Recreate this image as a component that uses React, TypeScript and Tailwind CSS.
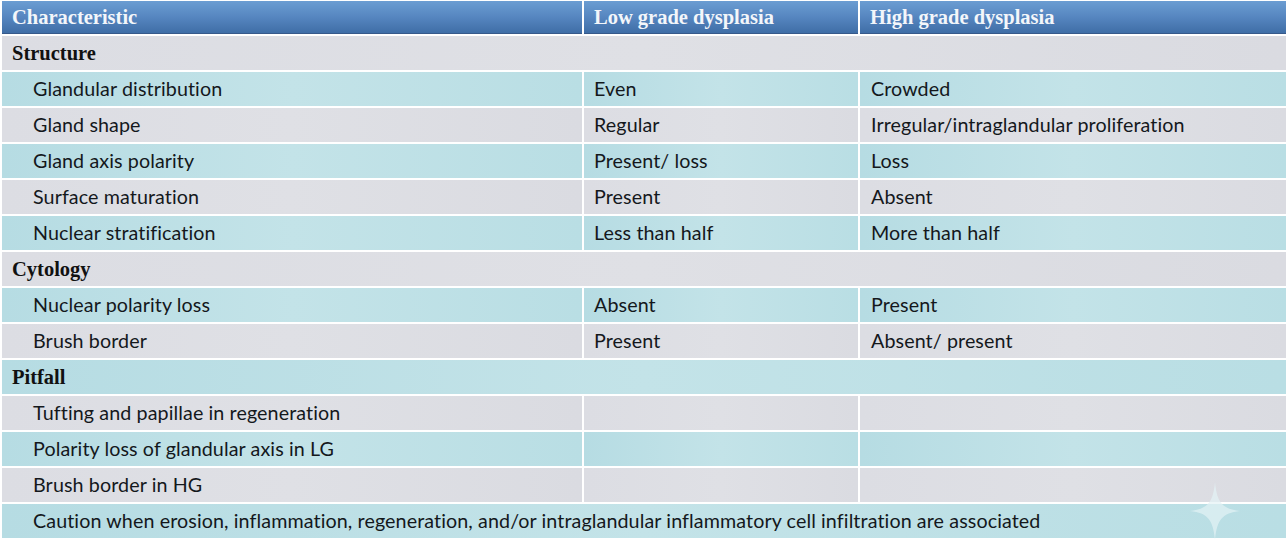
import React from "react";

type Row =
  | { kind: "section"; label: string; tone: "g" | "t" }
  | { kind: "item"; a: string; b: string; c: string; tone: "g" | "t" }
  | { kind: "full"; label: string; tone: "g" | "t" };

const rows: Row[] = [
  { kind: "section", label: "Structure", tone: "g" },
  { kind: "item", a: "Glandular distribution", b: "Even", c: "Crowded", tone: "t" },
  { kind: "item", a: "Gland shape", b: "Regular", c: "Irregular/intraglandular proliferation", tone: "g" },
  { kind: "item", a: "Gland axis polarity", b: "Present/ loss", c: "Loss", tone: "t" },
  { kind: "item", a: "Surface maturation", b: "Present", c: "Absent", tone: "g" },
  { kind: "item", a: "Nuclear stratification", b: "Less than half", c: "More than half", tone: "t" },
  { kind: "section", label: "Cytology", tone: "g" },
  { kind: "item", a: "Nuclear polarity loss", b: "Absent", c: "Present", tone: "t" },
  { kind: "item", a: "Brush border", b: "Present", c: "Absent/ present", tone: "g" },
  { kind: "section", label: "Pitfall", tone: "t" },
  { kind: "item", a: "Tufting and papillae in regeneration", b: "", c: "", tone: "g" },
  { kind: "item", a: "Polarity loss of glandular axis in LG", b: "", c: "", tone: "t" },
  { kind: "item", a: "Brush border in HG", b: "", c: "", tone: "g" },
  {
    kind: "full",
    label:
      "Caution when erosion, inflammation, regeneration, and/or intraglandular inflammatory cell infiltration are associated",
    tone: "t",
  },
];

const toneCls = (t: "g" | "t") =>
  t === "g"
    ? "bg-gradient-to-r from-[#dcdde3] via-[#dfe0e5] to-[#dadbe1]"
    : "bg-gradient-to-r from-[#b6dce3] via-[#c3e3e8] to-[#b9dee4]";

const body = "font-['Lato','Open_Sans',sans-serif] text-[19.7px] text-[#14181c] tracking-[0.1px]";
const serif = "font-['Liberation_Serif','DejaVu_Serif',serif]";

export default function App() {
  return (
    <div className="relative w-[1286px] h-[540px] overflow-hidden bg-white pl-[2px] pt-[1px] flex flex-col gap-[2px]">
      <div className="grid grid-cols-[580px_274px_1fr] gap-x-[2px] h-[33px] bg-white">
        {["Characteristic", "Low grade dysplasia", "High grade dysplasia"].map((h) => (
          <div
            key={h}
            className={`flex items-center pt-[1px] pl-[10px] bg-gradient-to-b from-[#6b9dd2] via-[#5686c0] to-[#3f6ea6] border-b border-[#36598a] text-[#f3f6fa] text-[20.5px] font-semibold ${serif}`}
          >
            {h}
          </div>
        ))}
      </div>
      {rows.map((r, i) => {
        if (r.kind === "section") {
          return (
            <div
              key={i}
              className={`h-[34px] flex items-center pl-[10px] ${toneCls(r.tone)} ${serif} font-bold text-[20.5px] text-[#111]`}
            >
              {r.label}
            </div>
          );
        }
        if (r.kind === "full") {
          return (
            <div key={i} className={`h-[34px] flex items-center pl-[31px] ${toneCls(r.tone)} ${body}`}>
              {r.label}
            </div>
          );
        }
        return (
          <div key={i} className={`h-[34px] grid grid-cols-[580px_274px_1fr] gap-x-[2px] ${body}`}>
            <div className={`flex items-center pl-[31px] ${toneCls(r.tone)}`}>{r.a}</div>
            <div className={`flex items-center pl-[10px] ${toneCls(r.tone)}`}>{r.b}</div>
            <div className={`flex items-center pl-[11px] ${toneCls(r.tone)}`}>{r.c}</div>
          </div>
        );
      })}
      <svg
        className="absolute left-[1190px] top-[482px] opacity-70"
        width="50"
        height="58"
        viewBox="0 0 50 58"
      >
        <path d="M25 0 C27 20 32 27 50 29 C32 31 27 38 25 58 C23 38 18 31 0 29 C18 27 23 20 25 0 Z" fill="#e4f3f6" />
      </svg>
    </div>
  );
}
